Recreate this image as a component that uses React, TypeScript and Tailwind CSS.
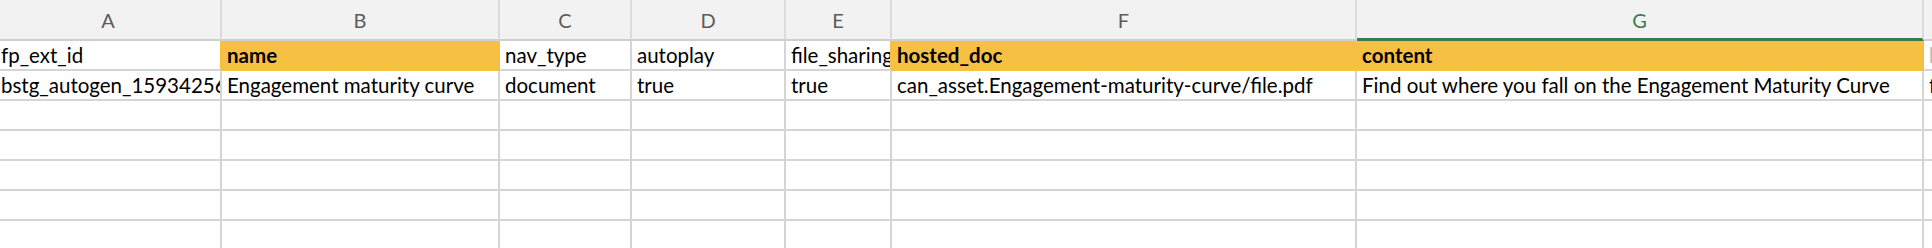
const COLS = [
  { key: "A", w: 226 },
  { key: "B", w: 278 },
  { key: "C", w: 132 },
  { key: "D", w: 154 },
  { key: "E", w: 106 },
  { key: "F", w: 465 },
  { key: "G", w: 567 },
  { key: "H", w: 120 },
];

type Cell = { text?: string; bold?: boolean; fill?: boolean; edge?: boolean; tone?: string };

const ROWS: Cell[][] = [
  [
    { text: "fp_ext_id", edge: true },
    { text: "name", bold: true, fill: true },
    { text: "nav_type" },
    { text: "autoplay" },
    { text: "file_sharing", edge: true },
    { text: "hosted_doc", bold: true, fill: true },
    { text: "content", bold: true, fill: true },
    { text: "link", bold: true, tone: "text-[#bcbcbc]" },
  ],
  [
    { text: "bstg_autogen_1593425612" },
    { text: "Engagement maturity curve" },
    { text: "document" },
    { text: "true" },
    { text: "true" },
    { text: "can_asset.Engagement-maturity-curve/file.pdf" },
    { text: "Find out where you fall on the Engagement Maturity Curve" },
    { text: "false" },
  ],
];

function HeaderRow() {
  return (
    <div className="flex h-[41px] bg-[#f2f2f2]">
      {COLS.map((c) => (
        <div
          key={c.key}
          style={{ width: c.w }}
          className={
            "flex shrink-0 items-center justify-center border-r-2 border-r-[#dcdcdc] text-[20px] " +
            (c.key === "G"
              ? "border-b-[3px] border-b-[#3b7a4f] pt-[1px] text-[#3b7a4f]"
              : "border-b-2 border-b-[#cfcfcf] text-[#5c5c5c]")
          }
        >
          {c.key}
        </div>
      ))}
    </div>
  );
}

function DataCell({ cell, w }: { cell: Cell; w: number }) {
  const right = cell.fill || cell.edge ? "border-r-[#f6c143]" : "border-r-[#d5d5d5]";
  const bottom = cell.fill ? "border-b-[#f6c143]" : "border-b-[#d5d5d5]";
  return (
    <div
      style={{ width: w }}
      className={
        "flex shrink-0 items-end overflow-hidden whitespace-nowrap border-r-2 border-b-2 pb-[2px] pl-[5px] text-[20.5px] leading-[24px] " +
        right +
        " " +
        bottom +
        " " +
        (cell.fill ? "bg-[#f6c143] " : "bg-white ") +
        (cell.bold ? "font-bold " : "") +
        (cell.tone ?? "text-black")
      }
    >
      {cell.text}
    </div>
  );
}

export default function App() {
  const blank = Array.from({ length: 5 });
  return (
    <div className="h-[248px] w-[1932px] overflow-hidden bg-white font-['Lato',sans-serif]">
      <div className="-ml-[4px] w-max">
        <HeaderRow />
        {ROWS.map((row, i) => (
          <div key={i} className="flex h-[30px]">
            {row.map((cell, j) => (
              <DataCell key={j} cell={cell} w={COLS[j].w} />
            ))}
          </div>
        ))}
        {blank.map((_, i) => (
          <div key={"b" + i} className="flex h-[30px]">
            {COLS.map((c) => (
              <DataCell key={c.key} cell={{}} w={c.w} />
            ))}
          </div>
        ))}
      </div>
    </div>
  );
}
